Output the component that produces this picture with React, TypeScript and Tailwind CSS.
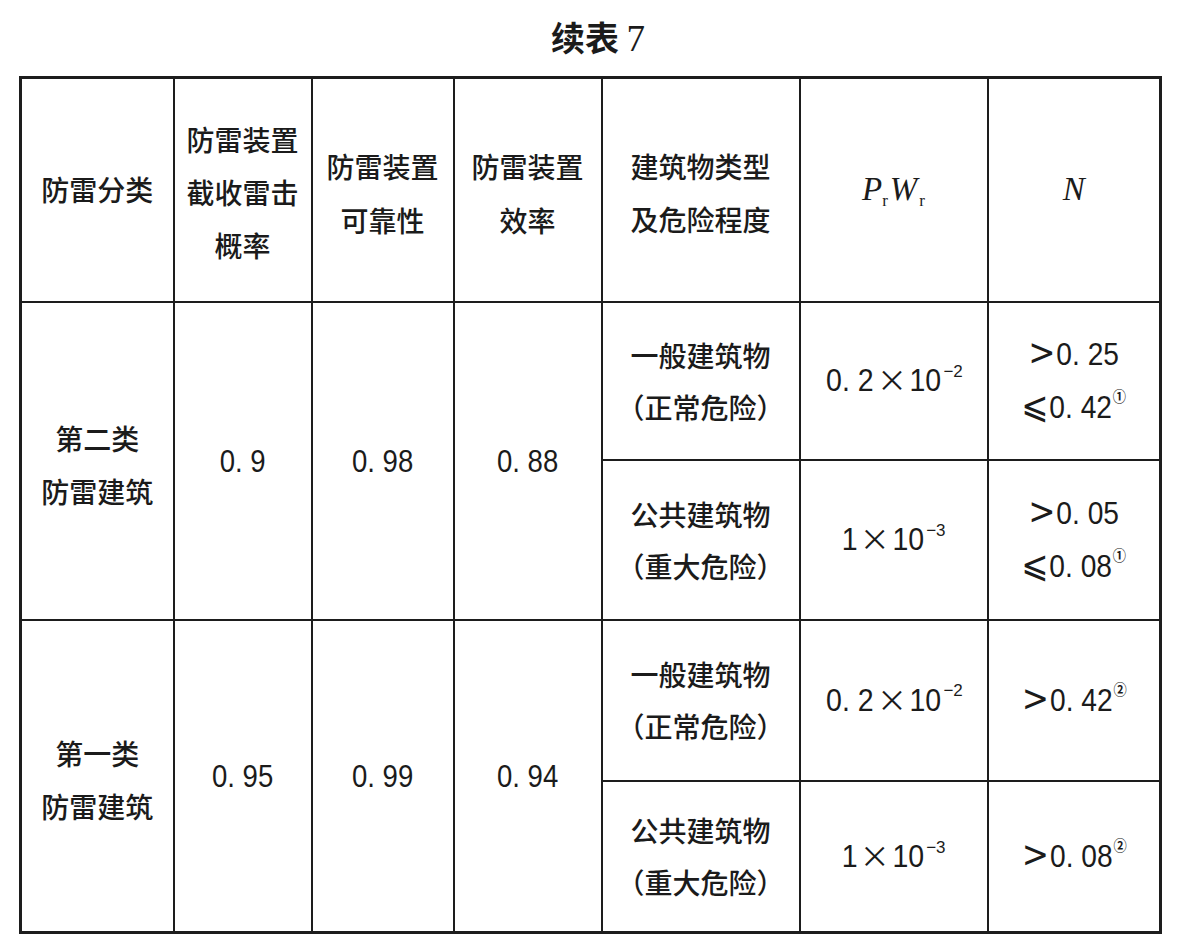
const cjk = "font-['Noto_Sans_CJK_SC',sans-serif]"
const num = "font-['Liberation_Sans','Noto_Sans_CJK_SC',sans-serif]"

const cell = "border-2 border-[#1d1d1d] text-center align-middle p-0"

function Paren({ children }: { children: React.ReactNode }) {
  // full-width parens, but tucked in like the printed table
  return (
    <>
      <span className="ml-[-14px]">（</span>
      {children}
      <span className="mr-[-14px]">）</span>
    </>
  )
}

function Digits({ children }: { children: React.ReactNode }) {
  return <span className={`${num} inline-block scale-x-[0.86] text-[32px]`}>{children}</span>
}

function Exp({ base, exp }: { base: string; exp: string }) {
  return (
    <span className={`${num} text-[31px] whitespace-nowrap`}>
      <span className="inline-block scale-x-[0.92]">{base}</span>
      <span className="font-['Noto_Sans_CJK_SC',sans-serif] text-[30px] mx-[1px]">×</span>
      <span className="inline-block scale-x-[0.92]">10</span>
      <sup className="text-[17px] top-[-0.85em] ml-[1px]">−{exp}</sup>
    </span>
  )
}

function Limit({ sign, value, mark }: { sign: string; value: string; mark?: string }) {
  // whole line squeezed a little, the print uses a narrow face
  return (
    <div className={`${num} text-[32px] leading-[53px] whitespace-nowrap scale-x-[0.88]`}>
      <span className="font-['DejaVu_Sans',sans-serif] text-[37px] leading-[0] mr-[1px]">{sign}</span>
      {value}
      {mark && (
        <sup className="font-['Noto_Sans_CJK_SC',sans-serif] font-bold text-[15px] top-[-1.05em] ml-[1px]">{mark}</sup>
      )}
    </div>
  )
}

function TypeCell({ first, second }: { first: string; second: string }) {
  return (
    <td className={`${cell} ${cjk} text-[28px] font-medium leading-[52px]`}>
      <div>{first}</div>
      <div>
        <Paren>{second}</Paren>
      </div>
    </td>
  )
}

export default function App() {
  return (
    <div className="min-h-[947px] w-[1182px] bg-white text-[#1b1b1b] pt-[16px]">
      <div className={`ml-[19px] w-[1138px] pl-[20px] text-center ${cjk} text-[34px] leading-[42px] font-bold`}>
        续表 <span className="font-['Liberation_Serif',serif] font-normal text-[37px]">7</span>
      </div>

      <table className="ml-[19px] mt-[16px] w-[1140px] table-fixed border-collapse border-[3px] border-[#1d1d1d]">
        <colgroup>
          <col className="w-[153px]" />
          <col className="w-[138px]" />
          <col className="w-[142px]" />
          <col className="w-[148px]" />
          <col className="w-[198px]" />
          <col className="w-[188px]" />
          <col className="w-[173px]" />
        </colgroup>
        <tbody>
          <tr className="h-[224px]">
            <td className={`${cell} ${cjk} text-[28px] font-medium leading-[53px]`}>防雷分类</td>
            <td className={`${cell} ${cjk} text-[28px] font-medium leading-[53px] pt-[6px]`}>
              <div>防雷装置</div>
              <div>截收雷击</div>
              <div>概率</div>
            </td>
            <td className={`${cell} ${cjk} text-[28px] font-medium leading-[54px] pt-[6px]`}>
              <div>防雷装置</div>
              <div>可靠性</div>
            </td>
            <td className={`${cell} ${cjk} text-[28px] font-medium leading-[54px] pt-[6px]`}>
              <div>防雷装置</div>
              <div>效率</div>
            </td>
            <td className={`${cell} ${cjk} text-[28px] font-medium leading-[53px] pt-[6px]`}>
              <div>建筑物类型</div>
              <div>及危险程度</div>
            </td>
            <td className={`${cell} font-['Liberation_Serif',serif] italic text-[33px]`}>
              P<sub className="not-italic text-[17px] bottom-[-0.35em] mr-[2px]">r</sub>W
              <sub className="not-italic text-[17px] bottom-[-0.35em] ml-[2px]">r</sub>
            </td>
            <td className={`${cell} font-['Liberation_Serif',serif] italic text-[33px]`}>N</td>
          </tr>

          <tr className="h-[158px]">
            <td rowSpan={2} className={`${cell} ${cjk} text-[28px] font-medium leading-[53px] pt-[8px]`}>
              <div>第二类</div>
              <div>防雷建筑</div>
            </td>
            <td rowSpan={2} className={cell}>
              <Digits>0. 9</Digits>
            </td>
            <td rowSpan={2} className={cell}>
              <Digits>0. 98</Digits>
            </td>
            <td rowSpan={2} className={cell}>
              <Digits>0. 88</Digits>
            </td>
            <TypeCell first="一般建筑物" second="正常危险" />
            <td className={cell}>
              <Exp base="0. 2" exp="2" />
            </td>
            <td className={cell}>
              <div className="flex flex-col items-center">
                <Limit sign=">" value="0. 25" />
                <Limit sign="⩽" value="0. 42" mark="①" />
              </div>
            </td>
          </tr>
          <tr className="h-[160px]">
            <TypeCell first="公共建筑物" second="重大危险" />
            <td className={cell}>
              <Exp base="1" exp="3" />
            </td>
            <td className={cell}>
              <div className="flex flex-col items-center">
                <Limit sign=">" value="0. 05" />
                <Limit sign="⩽" value="0. 08" mark="①" />
              </div>
            </td>
          </tr>

          <tr className="h-[161px]">
            <td rowSpan={2} className={`${cell} ${cjk} text-[28px] font-medium leading-[53px] pt-[8px]`}>
              <div>第一类</div>
              <div>防雷建筑</div>
            </td>
            <td rowSpan={2} className={cell}>
              <Digits>0. 95</Digits>
            </td>
            <td rowSpan={2} className={cell}>
              <Digits>0. 99</Digits>
            </td>
            <td rowSpan={2} className={cell}>
              <Digits>0. 94</Digits>
            </td>
            <TypeCell first="一般建筑物" second="正常危险" />
            <td className={cell}>
              <Exp base="0. 2" exp="2" />
            </td>
            <td className={cell}>
              <Limit sign=">" value="0. 42" mark="②" />
            </td>
          </tr>
          <tr className="h-[152px]">
            <TypeCell first="公共建筑物" second="重大危险" />
            <td className={cell}>
              <Exp base="1" exp="3" />
            </td>
            <td className={cell}>
              <Limit sign=">" value="0. 08" mark="②" />
            </td>
          </tr>
        </tbody>
      </table>
    </div>
  )
}
